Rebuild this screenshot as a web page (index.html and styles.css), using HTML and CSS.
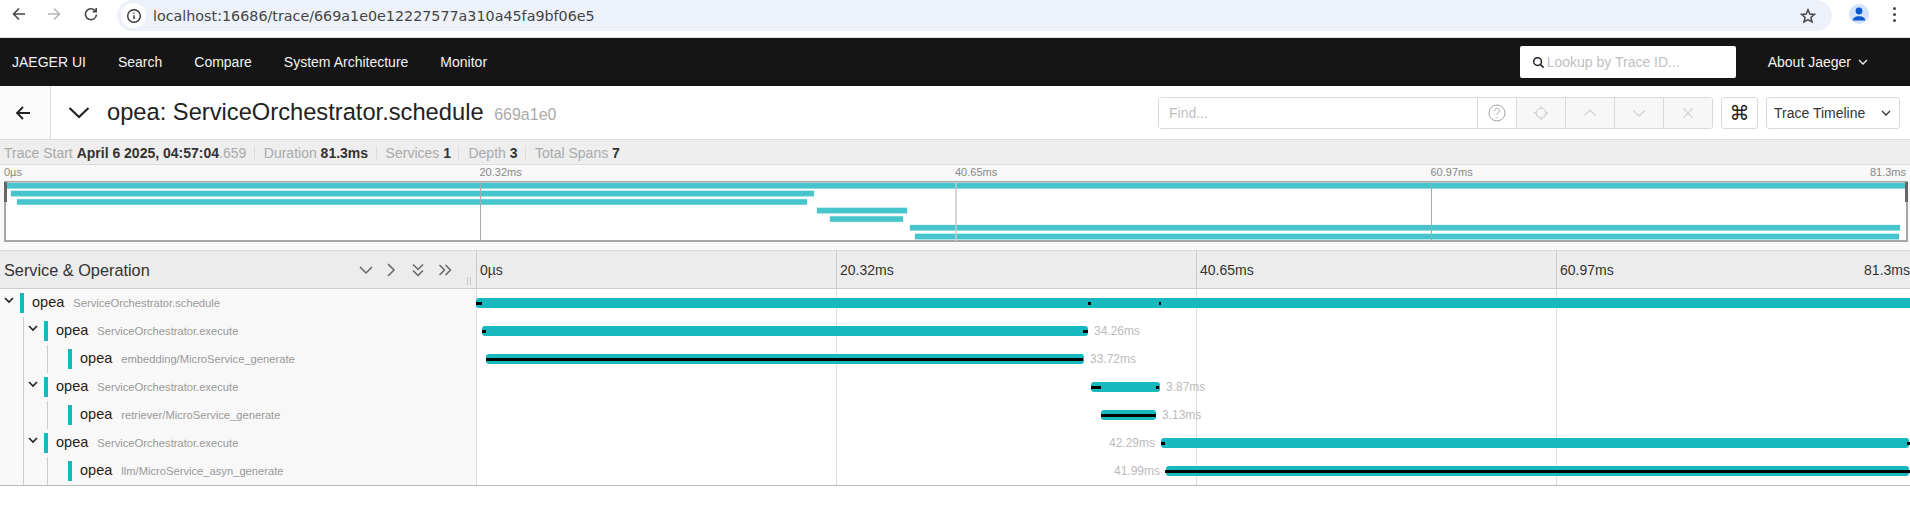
FILE: index.html
```html
<!DOCTYPE html>
<html lang="en">
<head>
    <meta charset="UTF-8">
    <title>Trace 669a1e0</title>
    <link rel="stylesheet" href="styles.css">
</head>
<body>
    <div class="browser-bar">
        <svg class="br-icon br-back" viewBox="0 0 14 14"><path d="M13 7H2M7 1.500 1.500 7 7 12.500"/></svg>
        <svg class="br-icon br-forward" viewBox="0 0 14 14"><path d="M1 7h11M7 1.500 12.500 7 7 12.500"/></svg>
        <svg class="br-icon br-reload" viewBox="0 0 14 14"><path d="M11.600 4.200A5.500 5.500 0 1 0 12.500 7.500M12.200 1v3.600H8.600"/></svg>
        <div class="omnibox">
            <span class="site-info">
                <svg viewBox="0 0 16 16"><circle cx="8" cy="8" r="6.300"/><path d="M8 7.200v4M8 4.400v1.400"/></svg>
            </span>
            <span class="url">localhost:16686/trace/669a1e0e12227577a310a45fa9bf06e5</span>
            <svg class="star" viewBox="0 0 16 16"><path d="M8 1.800 9.800 6l4.600.4-3.500 3 1.100 4.500L8 11.500l-4 2.400 1.100-4.500-3.500-3L6.200 6z"/></svg>
        </div>
        <span class="profile">
            <svg viewBox="0 0 20 20"><circle cx="10" cy="7" r="3.400"/><path d="M3.800 16.500c0-2.800 3-4.200 6.200-4.200s6.200 1.400 6.200 4.200z"/></svg>
        </span>
        <span class="kebab"><i></i><i></i><i></i></span>
    </div>

    <nav class="topnav">
        <a href="#">JAEGER UI</a>
        <a href="#">Search</a>
        <a href="#">Compare</a>
        <a href="#">System Architecture</a>
        <a href="#">Monitor</a>
        <div class="lookup">
            <svg viewBox="0 0 14 14"><circle cx="6" cy="6" r="4.200"/><path d="m9 9 3.500 3.500"/></svg>
            <input type="text" placeholder="Lookup by Trace ID...">
        </div>
        <a href="#" class="about">About Jaeger
            <svg class="chev-sm" viewBox="0 0 10 6"><path d="M1 1l4 4 4-4"/></svg>
        </a>
    </nav>

    <header class="trace-header">
        <div class="back-link">
            <svg viewBox="0 0 16 16"><path d="M15 8H2M8 2 2 8l6 6"/></svg>
        </div>
        <svg class="title-toggle" viewBox="0 0 22 13"><path d="M1.500 2 11 11l9.500-9"/></svg>
        <h1 class="trace-title">opea: ServiceOrchestrator.schedule <small>669a1e0</small></h1>
        <div class="find-group">
            <input type="text" class="find-input" placeholder="Find...">
            <span class="find-help">
                <svg viewBox="0 0 18 18"><circle cx="9" cy="9" r="8"/><path d="M6.600 7c0-3.200 4.800-3.200 4.800-.2 0 1.800-2.400 2-2.400 4M9 12.800v1"/></svg>
            </span>
            <button class="find-btn">
                <svg viewBox="0 0 16 16"><circle cx="8" cy="8" r="4.800"/><path d="M8 .8v2.400M8 12.800v2.400M.8 8h2.400M12.800 8h2.400"/></svg>
            </button>
            <button class="find-btn">
                <svg viewBox="0 0 16 16"><path d="M2.500 10.500 8 5l5.500 5.500"/></svg>
            </button>
            <button class="find-btn">
                <svg viewBox="0 0 16 16"><path d="M2.500 5.500 8 11l5.500-5.500"/></svg>
            </button>
            <button class="find-btn">
                <svg viewBox="0 0 16 16"><path d="m3.500 3.500 9 9M12.500 3.500l-9 9"/></svg>
            </button>
        </div>
        <button class="kbd-btn">⌘</button>
        <button class="view-select">Trace Timeline
            <svg class="chev-sm" viewBox="0 0 10 6"><path d="M1 1l4 4 4-4"/></svg>
        </button>
    </header>

    <div class="trace-meta">
        <span class="meta-item">Trace Start <b>April 6 2025, 04:57:04</b><em>.659</em></span>
        <span class="meta-item">Duration <b>81.3ms</b></span>
        <span class="meta-item">Services <b>1</b></span>
        <span class="meta-item">Depth <b>3</b></span>
        <span class="meta-item">Total Spans <b>7</b></span>
    </div>

    <section class="minimap">
        <div class="mini-ticks">
            <span>0µs</span>
            <span>20.32ms</span>
            <span>40.65ms</span>
            <span class="mini-last"><span>60.97ms</span><span>81.3ms</span></span>
        </div>
        <svg class="mini-graph" width="1910" height="61" viewBox="0 0 1910 61">
            <rect x="5" y="1" width="1902" height="59" fill="#fff" stroke="#8a8a8a" stroke-width="1.500"/>
            <g class="mini-bars">
                <rect x="6" y="2" width="1900" height="5.500" stroke="none"/>
                <rect x="11" y="9.800" width="803" height="5.500"/>
                <rect x="17" y="18.200" width="790" height="5.500"/>
                <rect x="817" y="26.800" width="90" height="5.500"/>
                <rect x="830" y="35.300" width="73" height="5.500"/>
                <rect x="910" y="44" width="990" height="5.500"/>
                <rect x="915" y="52.800" width="984" height="5.500"/>
            </g>
            <path d="M480.500 1v59M1431.500 1v59" stroke="#a8a8a8" fill="none"/>
            <path d="M956 1v59" stroke="#c9c9c9" stroke-width="1.500" fill="none"/>
            <rect x="4" y="1" width="3" height="20" fill="#666"/>
            <rect x="1905" y="1" width="3" height="20" fill="#666"/>
        </svg>
    </section>

    <section class="tl-view">
        <div class="tl-head">
            <div class="tl-head-left">
                <span class="tl-head-title">Service &amp; Operation</span>
                <div class="tl-head-icons">
                    <svg viewBox="0 0 14 14"><path d="M1 4l6 6 6-6"/></svg>
                    <svg viewBox="0 0 14 14"><path d="M4 1l6 6-6 6"/></svg>
                    <svg viewBox="0 0 14 14"><path d="M2 1.500l5 5 5-5M2 7.500l5 5 5-5"/></svg>
                    <svg viewBox="0 0 14 14"><path d="M1.500 2l5 5-5 5M7.500 2l5 5-5 5"/></svg>
                </div>
                <span class="tl-grip"></span>
            </div>
            <div class="tl-head-right">
                <span>0µs</span>
                <span>20.32ms</span>
                <span>40.65ms</span>
                <span class="tl-head-last"><span>60.97ms</span><span>81.3ms</span></span>
            </div>
        </div>

        <div class="span-row">
            <div class="span-name">
                <svg class="toggle" viewBox="0 0 10 7"><path d="M1 1l4 4 4-4"/></svg>
                <i class="svc-mark"></i><span class="svc">opea</span><span class="op">ServiceOrchestrator.schedule</span>
            </div>
            <div class="span-track">
                <div class="bar bar-root" style="width:1440px">
                    <i class="log" style="left:0;width:6px"></i>
                    <i class="log" style="left:612px;width:3px"></i>
                    <i class="log" style="left:683px;width:2px"></i>
                </div>
            </div>
        </div>

        <div class="span-row">
            <div class="span-name">
                <i class="indent"></i>
                <svg class="toggle" viewBox="0 0 10 7"><path d="M1 1l4 4 4-4"/></svg>
                <i class="svc-mark"></i><span class="svc">opea</span><span class="op">ServiceOrchestrator.execute</span>
            </div>
            <div class="span-track">
                <div class="offset" style="width:6px"></div>
                <div class="bar" style="width:606px">
                    <i class="log" style="left:0;width:4px"></i>
                    <i class="log" style="left:601px;width:5px"></i>
                </div>
                <span class="dur">34.26ms</span>
            </div>
        </div>

        <div class="span-row">
            <div class="span-name">
                <i class="indent"></i><i class="indent"></i>
                <span class="no-toggle"></span>
                <i class="svc-mark"></i><span class="svc">opea</span><span class="op">embedding/MicroService_generate</span>
            </div>
            <div class="span-track">
                <div class="offset" style="width:10px"></div>
                <div class="bar" style="width:598px">
                    <i class="log" style="left:0;width:597px"></i>
                </div>
                <span class="dur">33.72ms</span>
            </div>
        </div>

        <div class="span-row">
            <div class="span-name">
                <i class="indent"></i>
                <svg class="toggle" viewBox="0 0 10 7"><path d="M1 1l4 4 4-4"/></svg>
                <i class="svc-mark"></i><span class="svc">opea</span><span class="op">ServiceOrchestrator.execute</span>
            </div>
            <div class="span-track">
                <div class="offset" style="width:615px"></div>
                <div class="bar" style="width:69px">
                    <i class="log" style="left:0;width:10px"></i>
                    <i class="log" style="left:65px;width:3px"></i>
                </div>
                <span class="dur">3.87ms</span>
            </div>
        </div>

        <div class="span-row">
            <div class="span-name">
                <i class="indent"></i><i class="indent"></i>
                <span class="no-toggle"></span>
                <i class="svc-mark"></i><span class="svc">opea</span><span class="op">retriever/MicroService_generate</span>
            </div>
            <div class="span-track">
                <div class="offset" style="width:625px"></div>
                <div class="bar" style="width:55px">
                    <i class="log" style="left:0;width:55px"></i>
                </div>
                <span class="dur">3.13ms</span>
            </div>
        </div>

        <div class="span-row">
            <div class="span-name">
                <i class="indent"></i>
                <svg class="toggle" viewBox="0 0 10 7"><path d="M1 1l4 4 4-4"/></svg>
                <i class="svc-mark"></i><span class="svc">opea</span><span class="op">ServiceOrchestrator.execute</span>
            </div>
            <div class="span-track">
                <div class="offset" style="width:685px"><span class="dur-left">42.29ms</span></div>
                <div class="bar" style="width:748px">
                    <i class="log" style="left:0;width:4px"></i>
                    <i class="log" style="left:746px;width:3px"></i>
                </div>
            </div>
        </div>

        <div class="span-row">
            <div class="span-name">
                <i class="indent"></i><i class="indent"></i>
                <span class="no-toggle"></span>
                <i class="svc-mark"></i><span class="svc">opea</span><span class="op">llm/MicroService_asyn_generate</span>
            </div>
            <div class="span-track">
                <div class="offset" style="width:690px"><span class="dur-left">41.99ms</span></div>
                <div class="bar" style="width:743px">
                    <i class="log" style="left:-1px;width:745px"></i>
                </div>
            </div>
        </div>
    </section>
</body>
</html>
```

FILE: styles.css
```css
html, body {
    margin: 0;
    height: 516px;
    overflow: hidden;
    background: #fff;
}
body {
    font-family: "Liberation Sans", Arial, sans-serif;
    font-size: 14px;
    color: #333;
}
svg {
    display: block;
    fill: none;
    stroke: currentColor;
}
button {
    font-family: inherit;
    background: #fff;
    cursor: pointer;
}

/* browser chrome */
.browser-bar {
    display: flex;
    align-items: flex-start;
    height: 38px;
    box-sizing: border-box;
    border-bottom: 1px solid #e3e3e3;
}
.br-icon {
    width: 14px;
    height: 14px;
    margin-top: 7px;
    stroke-width: 1.6;
    color: #474747;
}
.br-back { margin-left: 12px; }
.br-forward { margin-left: 21px; color: #b4b4b4; }
.br-reload { margin-left: 23px; }
.omnibox {
    display: flex;
    align-items: center;
    width: 1715px;
    height: 31px;
    margin-left: 19px;
    background: #edf2fa;
    border-radius: 16px;
}
.site-info {
    display: flex;
    align-items: center;
    justify-content: center;
    width: 25px;
    height: 25px;
    margin-left: 4px;
    background: #fff;
    border-radius: 50%;
    color: #333;
}
.site-info svg {
    width: 16px;
    height: 16px;
    stroke-width: 1.4;
}
.url {
    margin-left: 7px;
    font-family: "DejaVu Sans", sans-serif;
    font-size: 14.3px;
    color: #444;
}
.star {
    width: 16px;
    height: 16px;
    margin-left: auto;
    margin-right: 16px;
    stroke-width: 1.5;
    color: #474747;
}
.profile {
    width: 20px;
    height: 20px;
    margin: 4px 0 0 17px;
    background: #d3e3fd;
    border-radius: 50%;
}
.profile svg {
    fill: #0b57d0;
    stroke: none;
}
.kebab {
    display: flex;
    flex-direction: column;
    gap: 3px;
    margin: 7px 0 0 24px;
}
.kebab i {
    width: 3px;
    height: 3px;
    background: #474747;
    border-radius: 50%;
}

/* top nav */
.topnav {
    display: flex;
    align-items: center;
    gap: 32px;
    height: 48px;
    padding: 0 42px 0 12px;
    background: #151515;
}
.topnav a {
    color: #f2f2f2;
    text-decoration: none;
}
.lookup {
    display: flex;
    align-items: center;
    width: 216px;
    height: 32px;
    margin-left: auto;
    box-sizing: border-box;
    padding-left: 12px;
    background: #fff;
    border-radius: 2px;
    color: #222;
}
.lookup svg {
    flex: none;
    width: 13px;
    height: 13px;
    stroke-width: 1.6;
}
.lookup input {
    width: 180px;
    margin-left: 2px;
    padding: 0;
    border: none;
    outline: none;
    font: 14px "Liberation Sans", Arial, sans-serif;
}
input::placeholder {
    color: #bfbfbf;
}
.about {
    display: flex;
    align-items: center;
    gap: 7px;
}
.chev-sm {
    width: 10px;
    height: 6px;
    stroke-width: 1.3;
}

/* trace header */
.trace-header {
    display: flex;
    align-items: center;
    height: 54px;
    box-sizing: border-box;
    padding-right: 10px;
    border-bottom: 1px solid #ddd;
}
.back-link {
    display: flex;
    align-items: center;
    justify-content: center;
    width: 46px;
    height: 100%;
    padding-right: 4px;
    background: #fafafa;
    border-right: 1px solid #ddd;
    color: #222;
}
.back-link svg {
    width: 16px;
    height: 16px;
    stroke-width: 1.8;
}
.title-toggle {
    width: 22px;
    height: 13px;
    margin-left: 17px;
    stroke-width: 2.2;
    color: #222;
}
.trace-title {
    margin: -1px 0 0 17px;
    font-size: 23.7px;
    font-weight: normal;
    color: #222;
}
.trace-title small {
    margin-left: 4px;
    font-size: 16px;
    color: #aaa;
}
.find-group {
    display: flex;
    width: 555px;
    height: 32px;
    margin-left: auto;
    box-sizing: border-box;
    border: 1px solid #d9d9d9;
    border-radius: 3px;
}
.find-input {
    flex: 1;
    min-width: 0;
    padding: 0 10px;
    border: none;
    outline: none;
    font: 14px "Liberation Sans", Arial, sans-serif;
}
.find-help {
    display: flex;
    align-items: center;
    justify-content: center;
    width: 38px;
    border-left: 1px solid #d9d9d9;
    color: #a6a6a6;
}
.find-help svg {
    width: 18px;
    height: 18px;
    stroke-width: 1;
}
.find-btn {
    display: flex;
    align-items: center;
    justify-content: center;
    width: 49px;
    padding: 0;
    background: #f7f7f7;
    border: none;
    border-left: 1px solid #d9d9d9;
    color: #d2d2d2;
}
.find-btn svg {
    width: 16px;
    height: 16px;
    stroke-width: 1.3;
}
.kbd-btn {
    width: 37px;
    height: 32px;
    margin-left: 8px;
    padding: 0;
    border: 1px solid #d9d9d9;
    border-radius: 3px;
    font-family: "DejaVu Sans", sans-serif;
    font-size: 20px;
    line-height: 1;
    color: #222;
}
.view-select {
    display: flex;
    align-items: center;
    justify-content: space-between;
    width: 134px;
    height: 32px;
    margin-left: 8px;
    padding: 0 8px 0 7px;
    border: 1px solid #d9d9d9;
    border-radius: 3px;
    font-size: 14px;
    color: #333;
}

/* summary line */
.trace-meta {
    display: flex;
    align-items: center;
    height: 25px;
    box-sizing: border-box;
    padding: 1px 0 0 4px;
    background: #eee;
    border-bottom: 1px solid #ddd;
    color: #aaa;
}
.meta-item {
    line-height: 14px;
    white-space: pre-wrap;
}
.meta-item + .meta-item {
    margin-left: 7.5px;
    padding-left: 9px;
    border-left: 1px solid #ddd;
}
.meta-item b {
    color: #333;
}
.meta-item em {
    font-style: normal;
}

/* minimap */
.minimap {
    height: 85px;
    box-sizing: border-box;
    background: #f8f8f8;
}
.mini-ticks {
    display: grid;
    grid-template-columns: repeat(4, 475.5px);
    height: 16px;
    padding-left: 4px;
    font-size: 11px;
    line-height: 15px;
    color: #888;
}
.mini-last {
    display: flex;
    justify-content: space-between;
}
.mini-graph {
    stroke: none;
}
.mini-bars rect {
    fill: #46c6cc;
    stroke: #d5f2f3;
    stroke-width: 1;
    paint-order: stroke;
}

/* span table */
.tl-head {
    display: flex;
    height: 39px;
    box-sizing: border-box;
    padding-top: 1px;
    background: #ececec;
    border-top: 1px solid #d8d8d8;
    border-bottom: 1px solid #ccc;
}
.tl-head-left {
    position: relative;
    display: flex;
    align-items: center;
    flex: 0 0 476px;
    box-sizing: border-box;
    padding-left: 4px;
    font-size: 16.3px;
}
.tl-head-icons {
    display: flex;
    gap: 13px;
    margin-left: auto;
    margin-right: 24px;
    color: #666;
}
.tl-head-icons svg {
    width: 14px;
    height: 14px;
    stroke-width: 1.5;
}
.tl-head-icons svg:first-child {
    margin-right: -2px;
}
.tl-grip {
    position: absolute;
    right: 5px;
    bottom: 3px;
    width: 2px;
    height: 8px;
    border-left: 1px solid #ccc;
    border-right: 1px solid #ccc;
}
.tl-head-right {
    display: grid;
    grid-template-columns: repeat(4, 360px);
    flex: none;
    align-items: center;
    margin-top: -1px;
    padding-top: 1px;
    background: repeating-linear-gradient(90deg, #ccc 0 1px, transparent 1px 360px);
}
.tl-head-right > span {
    padding-left: 4px;
}
.tl-head-last {
    display: flex;
    justify-content: space-between;
    padding-right: 6px;
}
.span-row {
    display: flex;
    height: 28px;
}
.span-row:last-child {
    box-shadow: 0 1px 0 #bbb;
}
.span-name {
    display: flex;
    align-items: center;
    flex: 0 0 476px;
    background: #f8f8f8;
}
.indent {
    align-self: stretch;
    flex: none;
    width: 24px;
    box-sizing: border-box;
    border-right: 1px solid #ccc;
}
.toggle {
    flex: none;
    width: 10px;
    height: 7px;
    margin: -6px 6px 0 4px;
    stroke-width: 1.6;
    color: #222;
}
.no-toggle {
    flex: none;
    width: 20px;
}
.svc-mark {
    flex: none;
    width: 4px;
    height: 20px;
    background: #17b8be;
}
.svc {
    margin-left: 8px;
    padding-bottom: 2px;
    font-size: 14.5px;
    color: #222;
}
.op {
    margin-left: 9px;
    font-size: 11.2px;
    color: #999;
}
.span-track {
    display: flex;
    align-items: center;
    flex: 0 0 1440px;
    background: repeating-linear-gradient(90deg, #ddd 0 1px, transparent 1px 360px);
}
.offset {
    display: flex;
    justify-content: flex-end;
    flex: none;
}
.bar {
    position: relative;
    flex: none;
    height: 10px;
    background: #17b8be;
    border-radius: 3px;
}
.bar-root {
    border-radius: 3px 0 0 3px;
}
.log {
    position: absolute;
    top: 4px;
    height: 3px;
    background: #000;
}
.dur {
    margin-left: 6px;
    font-size: 12px;
    color: #bbb;
}
.dur-left {
    margin-right: 6px;
    font-size: 12px;
    color: #bbb;
}
```
